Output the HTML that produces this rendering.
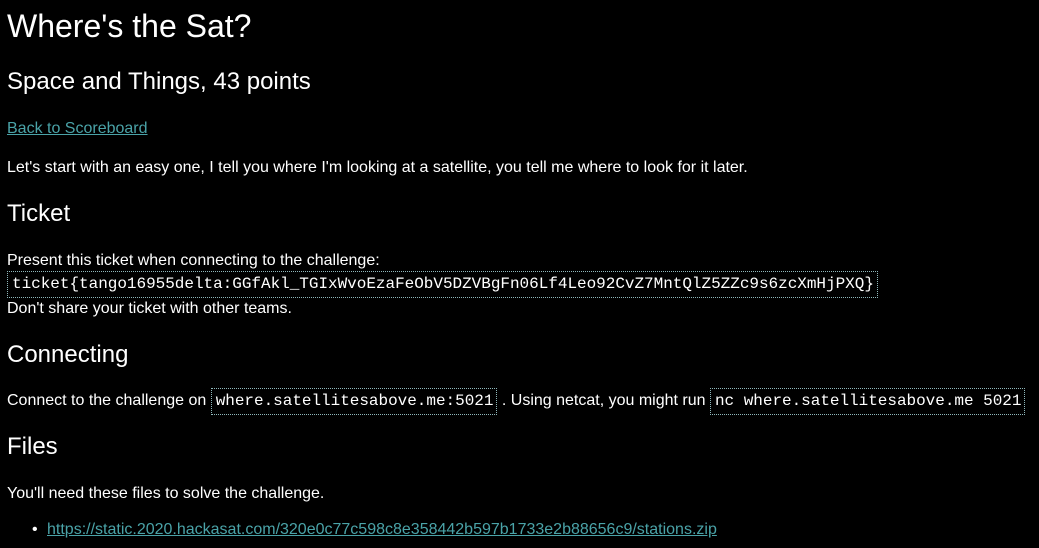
<!DOCTYPE html>
<html><head><style>
body{margin:0;background:#000;color:#fff;font-family:"Liberation Sans",sans-serif;width:1039px;height:548px;overflow:hidden;position:relative}
.a{position:absolute;left:7px;white-space:nowrap;line-height:1}
a{color:#4aa3a8;text-decoration:underline}
code{font-family:"Liberation Mono",monospace;font-size:16px;letter-spacing:-0.025px;border:1px dotted #8fb8bb;padding:3px 3px 4px 4px}
</style></head><body>
<div class="a" style="top:10px;font-size:32px">Where's the Sat?</div>
<div class="a" style="top:70px;font-size:24px">Space and Things, 43 points</div>
<div class="a" style="top:121px;font-size:16px"><a>Back to Scoreboard</a></div>
<div class="a" style="top:160px;font-size:16px">Let's start with an easy one, I tell you where I'm looking at a satellite, you tell me where to look for it later.</div>
<div class="a" style="top:202px;font-size:24px">Ticket</div>
<div class="a" style="top:253px;font-size:16px">Present this ticket when connecting to the challenge:</div>
<div class="a" style="top:276px;font-size:16px"><code>ticket{tango16955delta:GGfAkl_TGIxWvoEzaFeObV5DZVBgFn06Lf4Leo92CvZ7MntQlZ5ZZc9s6zcXmHjPXQ}</code></div>
<div class="a" style="top:301px;font-size:16px">Don't share your ticket with other teams.</div>
<div class="a" style="top:343px;font-size:24px">Connecting</div>
<div class="a" style="top:393px;font-size:16px">Connect to the challenge on <code>where.satellitesabove.me:5021</code> . Using netcat, you might run <code>nc where.satellitesabove.me 5021</code></div>
<div class="a" style="top:435px;font-size:24px">Files</div>
<div class="a" style="top:486px;font-size:16px">You'll need these files to solve the challenge.</div>
<div class="a" style="top:522px;left:32px;font-size:16px">•</div>
<div class="a" style="top:522px;left:47px;font-size:16px"><a>https://static.2020.hackasat.com/320e0c77c598c8e358442b597b1733e2b88656c9/stations.zip</a></div>
</body></html>
